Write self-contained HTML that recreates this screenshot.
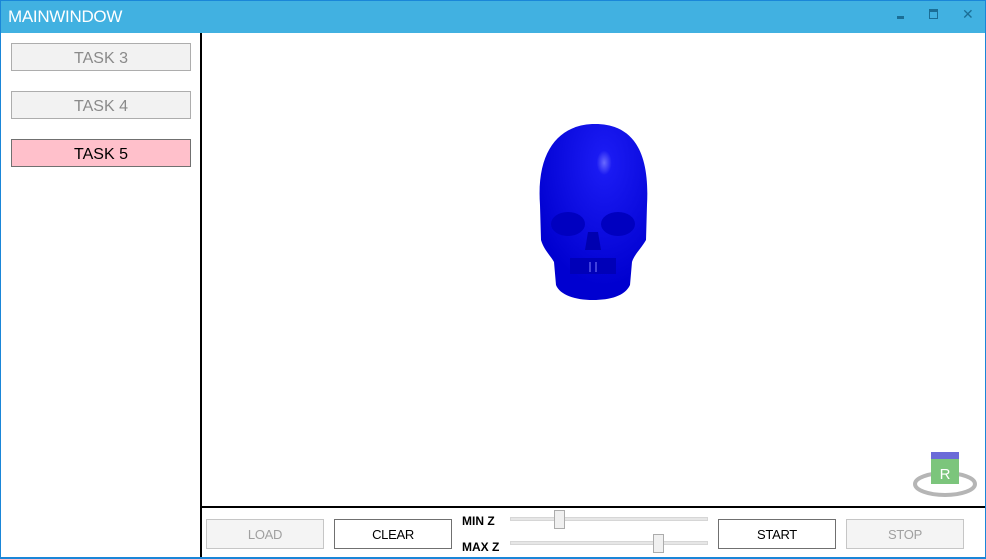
<!DOCTYPE html>
<html><head><meta charset="utf-8">
<style>
*{margin:0;padding:0;box-sizing:border-box}
body{width:986px;height:559px;overflow:hidden;background:#fff;font-family:"Liberation Sans",sans-serif;position:relative}
.win{position:absolute;left:0;top:0;width:986px;height:559px;border:1px solid #1a86d8}
.title{position:absolute;left:0;top:0;width:986px;height:33px;background:#41b1e1;border:1px solid #1a86d8;border-bottom:none}
.title span{position:absolute;left:7px;top:6px;color:#fff;font-size:17px;letter-spacing:-0.3px}
.btn{position:absolute;border:1px solid #adadad;background:#f2f2f2;color:#8a8a8a;font-size:16px;text-align:center;line-height:30px}
.b2{position:absolute;border:1px solid #707070;background:#fff;color:#000;font-size:13px;text-align:center;line-height:30px;letter-spacing:-0.3px}
.b2.dis{border-color:#c6c6c6;background:#f4f4f4;color:#a0a0a0}
.lbl{position:absolute;font-size:12px;font-weight:bold;color:#000}
.track{position:absolute;height:4px;background:#e6e6e6;border:1px solid #d6d6d6}
.thumb{position:absolute;width:11px;height:19px;background:#f0f0f0;border:1px solid #acacac}
</style></head><body>
<div class="win"></div>
<div class="title"><span>MAINWINDOW</span>
<div style="position:absolute;left:896px;top:15px;width:7px;height:3px;background:#1b6e96"></div>
<div style="position:absolute;left:928px;top:8px;width:9px;height:10px;border:1px solid #1b6e96;border-top:3px solid #1b6e96"></div>
<div style="position:absolute;left:961px;top:5px;color:#1b6e96;font-size:14px">✕</div>
</div>
<div style="position:absolute;left:200px;top:33px;width:2px;height:525px;background:#000"></div>
<div style="position:absolute;left:201px;top:506px;width:784px;height:2px;background:#000"></div>
<div style="position:absolute;left:985px;top:33px;width:1px;height:526px;background:#1a86d8"></div>
<div style="position:absolute;left:0;top:557px;width:986px;height:2px;background:#1a86d8"></div>
<div style="position:absolute;left:0;top:33px;width:1px;height:526px;background:#1a86d8"></div>

<div class="btn" style="left:11px;top:43px;width:180px;height:28px">TASK 3</div>
<div class="btn" style="left:11px;top:91px;width:180px;height:28px">TASK 4</div>
<div class="btn" style="left:11px;top:139px;width:180px;height:28px;background:#ffc0cb;border-color:#707070;color:#000">TASK 5</div>

<svg style="position:absolute;left:0;top:0" width="986" height="559">
<defs>
<radialGradient id="g" cx="0.6" cy="0.22" r="0.7"><stop offset="0" stop-color="#6a6aff"/><stop offset="0.1" stop-color="#1a1af2"/><stop offset="1" stop-color="#0000d0"/></radialGradient>
</defs>
<path d="M540 205 C536 150 560 124 595 124 C632 124 650 150 647 205 L646 240 C640 250 634 255 632 262 L630 285 C625 296 610 300 593 300 C575 300 560 295 556 285 L554 262 C550 255 544 250 541 240 Z" fill="url(#g)"/>
<ellipse cx="568" cy="224" rx="17" ry="12" fill="#0000c0"/>
<ellipse cx="618" cy="224" rx="17" ry="12" fill="#0000c0"/>
<path d="M588 232 L598 232 L601 250 L585 250 Z" fill="#0000b0"/>
<path d="M570 258 L616 258 L616 274 L570 274 Z" fill="#0000b8"/>
<line x1="590" y1="262" x2="590" y2="272" stroke="#8080ff" stroke-width="1"/>
<line x1="596" y1="262" x2="596" y2="272" stroke="#8080ff" stroke-width="1"/>
<ellipse cx="945" cy="484" rx="30" ry="11" fill="none" stroke="#b5b5b5" stroke-width="4"/>
<rect x="931" y="452" width="28" height="7" fill="#6b6bd8"/>
<rect x="931" y="459" width="28" height="25" fill="#7cc57c"/>
<text x="945" y="479" font-size="15" fill="#fff" text-anchor="middle" font-family="Liberation Sans">R</text>
</svg>

<div class="b2 dis" style="left:206px;top:519px;width:118px;height:30px">LOAD</div>
<div class="b2" style="left:334px;top:519px;width:118px;height:30px">CLEAR</div>
<div class="lbl" style="left:462px;top:514px">MIN Z</div>
<div class="lbl" style="left:462px;top:540px">MAX Z</div>
<div class="track" style="left:510px;top:517px;width:198px"></div>
<div class="thumb" style="left:554px;top:510px"></div>
<div class="track" style="left:510px;top:541px;width:198px"></div>
<div class="thumb" style="left:653px;top:534px"></div>
<div class="b2" style="left:718px;top:519px;width:118px;height:30px">START</div>
<div class="b2 dis" style="left:846px;top:519px;width:118px;height:30px">STOP</div>
</body></html>
